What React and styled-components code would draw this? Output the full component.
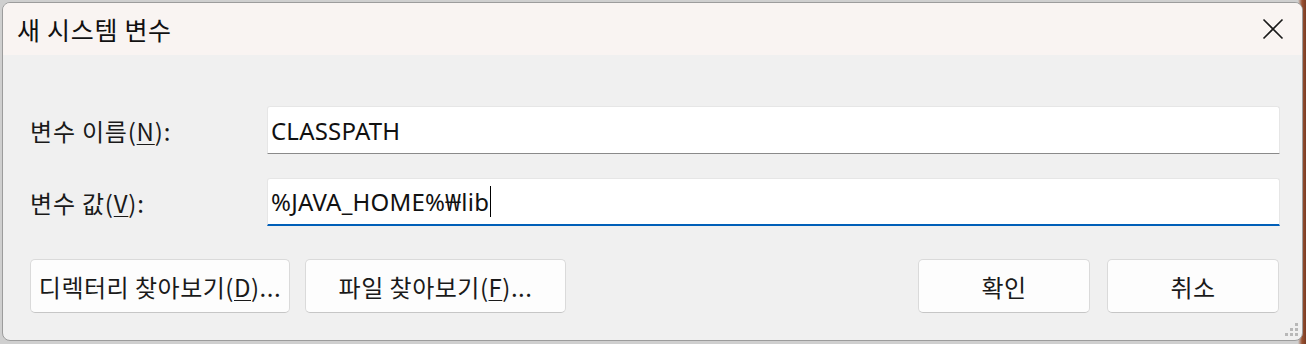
import React from 'react'
import styled, { createGlobalStyle } from 'styled-components'

const GlobalStyle = createGlobalStyle`
  body {
    margin: 0;
    font-family: "Noto Sans CJK KR", "Noto Sans", sans-serif;
  }
`

const Desktop = styled.div`
  width: 1306px;
  height: 344px;
  box-sizing: border-box;
  padding: 2px 3px 3px 2px;
  background: linear-gradient(to right, #cfcfcf 0, #cfcfcf 1298px, #9a5334 1302px, #7a3b22 100%);
  overflow: hidden;
`

const Window = styled.div`
  position: relative;
  height: 100%;
  display: flex;
  flex-direction: column;
  border: 1px solid #9c9c9c;
  border-radius: 8px;
  overflow: hidden;
  background: #f0f0f0;
  box-sizing: border-box;
`

const TitleBar = styled.div`
  height: 52px;
  flex: none;
  display: flex;
  align-items: center;
  justify-content: space-between;
  padding-left: 14px;
  background: #f9f4f2;
`

const Title = styled.div`
  font-size: 25px;
  color: #111;
  letter-spacing: 0.7px;
`

const CloseButton = styled.div`
  width: 48px;
  height: 100%;
  margin-right: 5px;
  display: flex;
  align-items: center;
  justify-content: center;
`

const Body = styled.div`
  flex: 1;
  padding: 51px 21px 0 27px;
`

const Form = styled.div`
  display: grid;
  grid-template-columns: 237px 1013px;
  row-gap: 24px;
`

const Label = styled.div`
  align-self: center;
  font-size: 24px;
  color: #1a1a1a;
  letter-spacing: 0.8px;

  u {
    text-decoration-thickness: 1px;
    text-underline-offset: 3px;
  }
`

const Field = styled.div`
  height: 48px;
  box-sizing: border-box;
  display: flex;
  align-items: center;
  padding: 0 3px;
  background: #fff;
  border: 1px solid #e6e6e6;
  border-bottom: ${p => (p.$focused ? '2px solid #005fb8' : '1px solid #8a8a8a')};
  border-radius: 3px 3px 0 0;
  font-family: "Noto Sans", "Noto Sans CJK KR", sans-serif;
  font-size: 24px;
  letter-spacing: 0.2px;
  color: #111;
`

const Caret = styled.span`
  display: inline-block;
  width: 0;
  height: 31px;
  border-left: 1.5px solid #000;
  margin-left: 1px;
`

const ButtonRow = styled.div`
  display: flex;
  margin-top: 33px;
  padding-right: 2px;
`

const Group = styled.div`
  display: flex;
  gap: ${p => p.$gap}px;
  margin-left: ${p => (p.$right ? 'auto' : '0')};
`

const Button = styled.div`
  width: ${p => p.$w}px;
  height: 54px;
  box-sizing: border-box;
  display: flex;
  align-items: center;
  justify-content: center;
  background: #fdfdfd;
  border: 1px solid #dadada;
  border-bottom-color: #c6c6c6;
  border-radius: 5px;
  font-size: 24px;
  letter-spacing: 0.5px;
  color: #1a1a1a;

  u {
    text-decoration-thickness: 1px;
    text-underline-offset: 3px;
  }
`

const Grip = styled.div`
  position: absolute;
  right: 4px;
  bottom: 4px;
  display: grid;
  grid-template-columns: repeat(3, 3px);
  grid-template-rows: repeat(3, 3px);
  gap: 2px;

  span {
    background: #b8b8b8;
  }
`

const gripCells = [false, false, true, false, true, true, true, true, true]

export default function App() {
  return (
    <Desktop>
      <GlobalStyle />
      <Window>
        <TitleBar>
          <Title>새 시스템 변수</Title>
          <CloseButton>
            <svg width="22" height="22" viewBox="0 0 22 22">
              <path d="M1.5 1.5 L20.5 20.5 M20.5 1.5 L1.5 20.5" stroke="#1a1a1a" strokeWidth="1.6" fill="none" />
            </svg>
          </CloseButton>
        </TitleBar>
        <Body>
          <Form>
            <Label>변수 이름(<u>N</u>):</Label>
            <Field>CLASSPATH</Field>
            <Label>변수 값(<u>V</u>):</Label>
            <Field $focused>
              %JAVA_HOME%₩lib<Caret />
            </Field>
          </Form>
          <ButtonRow>
            <Group $gap={15}>
              <Button $w={260}>디렉터리 찾아보기(<u>D</u>)...</Button>
              <Button $w={261}>파일 찾아보기(<u>F</u>)...</Button>
            </Group>
            <Group $gap={17} $right>
              <Button $w={172}>확인</Button>
              <Button $w={172}>취소</Button>
            </Group>
          </ButtonRow>
        </Body>
        <Grip>
          {gripCells.map((on, i) => (
            <span key={i} style={{ opacity: on ? 1 : 0 }} />
          ))}
        </Grip>
      </Window>
    </Desktop>
  )
}
